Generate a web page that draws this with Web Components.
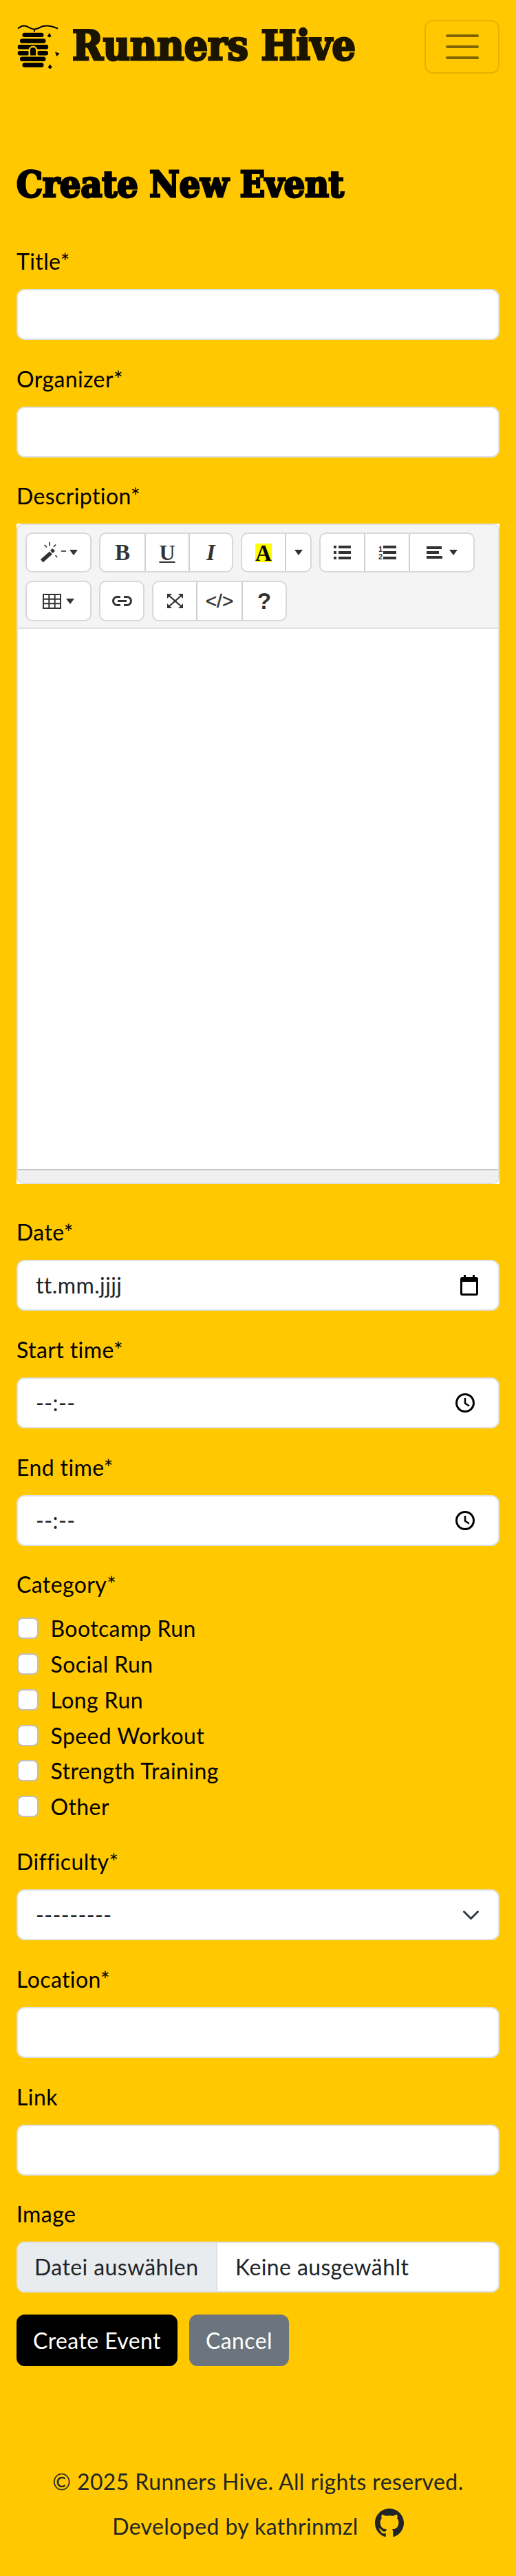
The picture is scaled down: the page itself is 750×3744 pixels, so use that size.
<!doctype html>
<html lang="de"><head><meta charset="utf-8"><title>Create New Event</title>
<style>
html,body{margin:0;padding:0}
body{background:#ffc800;color:#000;font:32px/48px Lato,"Noto Sans",sans-serif;letter-spacing:.4px;width:750px;height:3744px;overflow:hidden}
</style></head><body>
<rh-app></rh-app>
<script>
function def(name,css,html,init){
  customElements.define(name,class extends HTMLElement{
    constructor(){super();const r=this.attachShadow({mode:'open'});r.innerHTML='<style>'+css+'</style>'+html;if(init)init.call(this,r);}
  });
}
const caret=(w=12,h=8)=>`<svg width="${w}" height="${h}" viewBox="0 0 12 8"><path d="M0 0h12L6 8z" fill="#333"/></svg>`;

def('rh-navbar',`
:host{display:flex;align-items:center;justify-content:space-between;padding:29px 24px 0 25px;height:78px}
.brand{display:flex;align-items:center;gap:17px;min-width:0}
svg.logo{display:block;filter:blur(.4px)}
.name{font:bold 60px/78px "DejaVu Serif Condensed","DejaVu Serif",serif;letter-spacing:0;color:#1a1400;-webkit-text-stroke:3px #1a1400;white-space:nowrap;position:relative;top:-2px}
button{box-sizing:border-box;width:109px;height:78px;background:transparent;border:2px solid rgba(0,0,0,.1);border-radius:12px;padding:0;display:flex;align-items:center;justify-content:center}
`,`<div class="brand">
<svg class="logo" width="63" height="64" viewBox="25 37 63 64" aria-hidden="true">
<path d="M26 42.5c4-3.5 8-5 12-3.5 4 1.5 8 4.5 12 4.5 5 0 8-3.5 13-4.5 7-1.500 13 0 21 3.500" fill="none" stroke="#000" stroke-width="2"/>
<path d="M50 43v4" stroke="#000" stroke-width="2"/>
<g fill="#000">
<rect x="32.500" y="48.700" width="31" height="6.400" rx="3"/>
<rect x="29" y="57.300" width="37.500" height="6.400" rx="3"/>
<rect x="25.700" y="66" width="44.500" height="6.400" rx="3"/>
<rect x="25.700" y="75" width="17" height="6.400" rx="3"/>
<rect x="54" y="75" width="16" height="6.400" rx="3"/>
<rect x="29" y="83.500" width="37.500" height="6.400" rx="3"/>
<rect x="32.500" y="92.300" width="31" height="6.400" rx="3"/>
</g>
<path d="M41.500 82v-8a6.500 6.500 0 0 1 13 0v8z" fill="#ffc800"/>
<path d="M44 81.500v-7.500a4 4 0 0 1 8 0v7.500z" fill="#000"/>
<g fill="#000">
<path d="M71.700 49l3 4.500-3 2-3-2z"/>
<path d="M80 76.500l6.500 2-4 4.500z"/>
<path d="M72.700 94.500l3 4-3 3-3-3z"/>
</g></svg>
<span class="name"><slot></slot></span></div>
<button aria-label="Toggle navigation"><svg width="48" height="36" viewBox="0 0 48 36"><g stroke="#806400" stroke-width="4" stroke-linecap="round"><path d="M2 2h44M2 18h44M2 34h44"/></g></svg></button>`);

def('rh-title',`
:host{display:block;margin:0}
h1{margin:0;padding:128px 24px 0;height:121px;font:bold 53px/64px "DejaVu Serif Condensed","DejaVu Serif",serif;letter-spacing:0;color:#000;-webkit-text-stroke:3px #000}
`,`<h1><slot></slot></h1>`);

def('rh-field',`
:host{display:block;margin:0 0 32.670px}
label{display:block;height:48px;line-height:48px;margin-bottom:16px;color:#000}
`,`<label><slot></slot></label><slot name="control"></slot>`);

const boxCss=`
:host{display:block}
.box{box-sizing:border-box;width:100%;height:74px;background:#fff;border:2px solid #dee2e6;border-radius:12px;color:#212529;font:inherit;letter-spacing:inherit;display:flex;align-items:center;justify-content:space-between;padding:0 26px;outline:0;margin:0}
`;
def('rh-input',boxCss,`<input class="box" type="text">`);
def('rh-picker',boxCss+`
svg{display:block}
`,`<div class="box"><span><slot></slot></span><slot name="icon"></slot></div>`);
def('rh-select',boxCss+`
.box{padding-right:28px}
svg{display:block}
`,`<div class="box" role="combobox"><span><slot></slot></span><svg width="23" height="13" viewBox="0 0 23 13"><path d="M1.500 1.500l10 10 10-10" fill="none" stroke="#343a40" stroke-width="3" stroke-linecap="round" stroke-linejoin="round"/></svg></div>`);
def('rh-file',boxCss+`
.box{padding:0;justify-content:flex-start;overflow:hidden}
.b{background:#e9ecef;height:100%;display:flex;align-items:center;padding:0 24px;width:290px;box-sizing:border-box;border-right:2px solid #dee2e6;white-space:nowrap}
.t{padding-left:26px;white-space:nowrap}
`,`<div class="box"><span class="b"><slot name="button"></slot></span><span class="t"><slot></slot></span></div>`);

def('rh-check',`
:host{display:flex;align-items:flex-start;height:48px;margin-bottom:3.800px;line-height:48px;color:#000}
i{flex:none;box-sizing:border-box;width:31px;height:31px;margin:8px 18px 0 .5px;background:#fff;border:2px solid #bfbfbf;border-radius:8px}
`,`<i role="checkbox" aria-checked="false"></i><span><slot></slot></span>`);

def('rh-actions',`
:host{display:flex;gap:17px}
`,`<slot></slot>`);
def('rh-btn',`
:host{display:flex;align-items:center;justify-content:center;box-sizing:border-box;height:75px;border-radius:12px;color:#fff;background:var(--bg,#000);padding:0 24px;white-space:nowrap}
`,`<slot></slot>`);

def('rh-footer',`
:host{display:block;text-align:center;color:#212529;padding-top:144px}
p{margin:0 0 17px;height:48px;line-height:48px;display:flex;justify-content:center;align-items:center}
svg{display:block;margin-left:24px;position:relative;top:-5px}
`,`<p><slot></slot></p><p><slot name="dev"></slot><svg width="42" height="42" viewBox="0 0 16 16" aria-label="GitHub"><path fill="#212529" d="M8 0C3.580 0 0 3.580 0 8c0 3.540 2.290 6.530 5.470 7.590.4.070.55-.17.55-.38 0-.19-.010-.82-.010-1.490-2.010.37-2.530-.49-2.690-.94-.090-.23-.48-.94-.82-1.130-.28-.15-.68-.52-.010-.53.63-.010 1.080.58 1.230.82.72 1.210 1.870.87 2.330.66.070-.52.28-.87.51-1.070-1.780-.2-3.640-.89-3.640-3.950 0-.87.31-1.590.82-2.150-.080-.2-.36-1.020.080-2.120 0 0 .67-.21 2.200.82.64-.18 1.320-.27 2-.27.68 0 1.360.090 2 .27 1.530-1.040 2.200-.82 2.200-.82.44 1.100.16 1.920.080 2.120.51.56.82 1.270.82 2.150 0 3.070-1.870 3.750-3.650 3.950.29.25.54.73.54 1.480 0 1.070-.010 1.930-.010 2.200 0 .21.15.46.55.38A8.013 8.013 0 0016 8c0-4.420-3.580-8-8-8z"/></svg></p>`);

def('tb-group',`
:host{display:inline-flex;box-sizing:border-box;height:var(--h,58px);border:2px solid #d8d8d8;border-radius:10px;background:#fff;overflow:hidden}
`,`<slot></slot>`);
def('tb-btn',`
:host{display:flex;align-items:center;justify-content:center;gap:6px;box-sizing:border-box;height:100%;border-left:2px solid #cfcfcf;color:#333}
:host([first]){border-left:0}
`,`<slot></slot>`);

def('rh-editor',`
:host{display:block;background:#fff;margin-bottom:46px}
.frame{box-sizing:border-box;height:960px;border:2px solid #e0e0e0;border-radius:10px;overflow:hidden;display:flex;flex-direction:column;background:#fff}
.bar{background:#f4f4f4;border-bottom:2px solid #e3e3e3;height:151px;box-sizing:border-box;padding:11px 0 0 11px;display:flex;flex-direction:column;gap:12px;flex:none}
.row{display:flex;gap:11px}
.row.b{--h:59px;gap:11px}
.edit{flex:1;background:#fff}
.status{flex:none;height:20px;box-sizing:border-box;background:#f0f0f0;border-top:2px solid #c4c4c4}
svg{display:block}
.t{font-family:"Liberation Serif",serif;font-size:33px;line-height:33px;color:#333;letter-spacing:0}
.B{font-weight:bold}.U{text-decoration:underline;text-underline-offset:2px;text-decoration-thickness:2px;font-size:32px;line-height:33px;font-family:"Liberation Serif",serif;font-weight:bold;color:#333;letter-spacing:0}.I{font-style:italic;font-weight:bold}
.hl{display:block;width:24px;height:27px;background:#ff0;color:#000;font:bold 33px/29px "Liberation Serif",serif;text-align:center;letter-spacing:0}
.code{font:28px/28px "Liberation Sans",sans-serif;color:#333;letter-spacing:0;-webkit-text-stroke:.4px #333}
.q{font:bold 33px/33px "Liberation Sans",sans-serif;color:#333;letter-spacing:0}
`,`<div class="frame"><div class="bar">
<div class="row">
<tb-group><tb-btn first style="width:92px;gap:0">
<svg width="30" height="30" viewBox="0 0 30 30"><g fill="#333"><path d="M1 25L14 13.500l4 4L4.500 29.500z"/><path d="M15 12l3.500-3 3.500 4-3.500 3z"/></g><g stroke="#333" stroke-width="1.700" fill="none"><path d="M14 0v5.500M6.500 4l3.500 3.500M23 3.500l-3 3.500M22.500 19l2.500 3"/></g></svg>
<svg width="7" height="2" viewBox="0 0 7 2" style="margin:0 5px 4px 1px"><path d="M0 0h7v2H0z" fill="#555"/></svg>${caret()}</tb-btn></tb-group>
<tb-group><tb-btn first style="width:64px"><span class="t B">B</span></tb-btn><tb-btn style="width:64px"><span class="U">U</span></tb-btn><tb-btn style="width:63px"><span class="t I">I</span></tb-btn></tb-group>
<tb-group><tb-btn first style="width:62px"><span class="hl">A</span></tb-btn><tb-btn style="width:37px">${caret()}</tb-btn></tb-group>
<tb-group><tb-btn first style="width:63px"><svg width="25" height="20" viewBox="0 0 25 20"><path fill="#333" d="M0 0h4v4H0zM7 0h18v4H7zM0 8h4v4H0zM7 8h18v4H7zM0 16h4v4H0zM7 16h18v4H7z"/></svg></tb-btn>
<tb-btn style="width:65px"><svg width="26" height="22" viewBox="0 0 26 22"><text x="0" y="10" font-size="11" font-weight="bold" font-family="Liberation Sans" fill="#333" letter-spacing="0">1</text><text x="0" y="21" font-size="11" font-weight="bold" font-family="Liberation Sans" fill="#333" letter-spacing="0">2</text><path fill="#333" d="M7 1h19v4H7zM7 9h19v4H7zM7 17h19v4H7z"/></svg></tb-btn>
<tb-btn style="width:94px;gap:10px"><svg width="23" height="18" viewBox="0 0 23 18"><path fill="#333" d="M0 0h22v4H0zM0 7h18v4H0zM0 14h23v4H0z"/></svg>${caret()}</tb-btn></tb-group>
</div>
<div class="row b">
<tb-group><tb-btn first style="width:92px;gap:7px"><svg width="27" height="22" viewBox="0 0 27 22"><path fill="none" stroke="#333" stroke-width="2" d="M1 1h25v20H1zM9.300 1v20M17.700 1v20M1 7.700h25M1 14.300h25"/></svg>${caret()}</tb-btn></tb-group>
<tb-group><tb-btn first style="width:62px"><svg width="29" height="15" viewBox="0 0 29 15"><g fill="none" stroke="#333" stroke-width="3"><path d="M12 1.500H7.500a6 6 0 0 0 0 12H12M17 1.500h4.500a6 6 0 0 1 0 12H17"/><path d="M8 7.500h13"/></g></svg></tb-btn></tb-group>
<tb-group><tb-btn first style="width:62px"><svg width="23" height="21" viewBox="0 0 23 21"><path fill="none" stroke="#333" stroke-width="2.200" d="M3 3l17 15M20 3L3 18"/><path fill="#333" d="M0 0h7L0 7zM23 0h-7l7 7zM0 21h7l-7-7zM23 21h-7l7-7z"/></svg></tb-btn><tb-btn style="width:66px"><span class="code">&lt;/&gt;</span></tb-btn><tb-btn style="width:64px"><span class="q">?</span></tb-btn></tb-group>
</div></div><div class="edit"></div><div class="status"></div></div>`);

const field=(l,c)=>`<rh-field>${l}<div slot="control">${c}</div></rh-field>`;
const cal=`<svg slot="icon" width="26" height="30" viewBox="0 0 26 30" style="display:block;margin-right:3px"><path fill="#000" d="M5 0h3v3h10V0h3v3h2a3 3 0 0 1 3 3v21a3 3 0 0 1-3 3H3a3 3 0 0 1-3-3V6a3 3 0 0 1 3-3h2zM3 10v17h20V10z"/></svg>`;
const clk=`<svg slot="icon" width="28" height="28" viewBox="0 0 28 28" style="display:block;margin-right:8px"><circle cx="14" cy="14" r="12.500" fill="none" stroke="#000" stroke-width="3"/><path d="M14 7v7.500l6 4" fill="none" stroke="#000" stroke-width="2.500"/></svg>`;

def('rh-app',`
:host{display:block}
main{padding:0 24px}
`,`<rh-navbar>Runners Hive</rh-navbar>
<rh-title>Create New Event</rh-title>
<main>
${field('Title*','<rh-input></rh-input>')}
${field('Organizer*','<rh-input></rh-input>')}
<rh-field style="margin-bottom:0">Description*<div slot="control"><rh-editor></rh-editor></div></rh-field>
${field('Date*','<rh-picker>tt.mm.jjjj'+cal+'</rh-picker>')}
${field('Start time*','<rh-picker>--:--'+clk+'</rh-picker>')}
${field('End time*','<rh-picker>--:--'+clk+'</rh-picker>')}
<rh-field style="margin-bottom:32px">Category*<div slot="control">
<rh-check>Bootcamp Run</rh-check><rh-check>Social Run</rh-check><rh-check>Long Run</rh-check><rh-check>Speed Workout</rh-check><rh-check>Strength Training</rh-check><rh-check>Other</rh-check>
</div></rh-field>
${field('Difficulty*','<rh-select>---------</rh-select>')}
${field('Location*','<rh-input></rh-input>')}
${field('Link','<rh-input></rh-input>')}
<rh-field style="margin-bottom:32px">Image<div slot="control"><rh-file><span slot="button">Datei auswählen</span>Keine ausgewählt</rh-file></div></rh-field>
<rh-actions><rh-btn>Create Event</rh-btn><rh-btn style="--bg:#6c757d">Cancel</rh-btn></rh-actions>
</main>
<rh-footer>© 2025 Runners Hive. All rights reserved.<span slot="dev">Developed by kathrinmzl</span></rh-footer>`);
</script></body></html>
